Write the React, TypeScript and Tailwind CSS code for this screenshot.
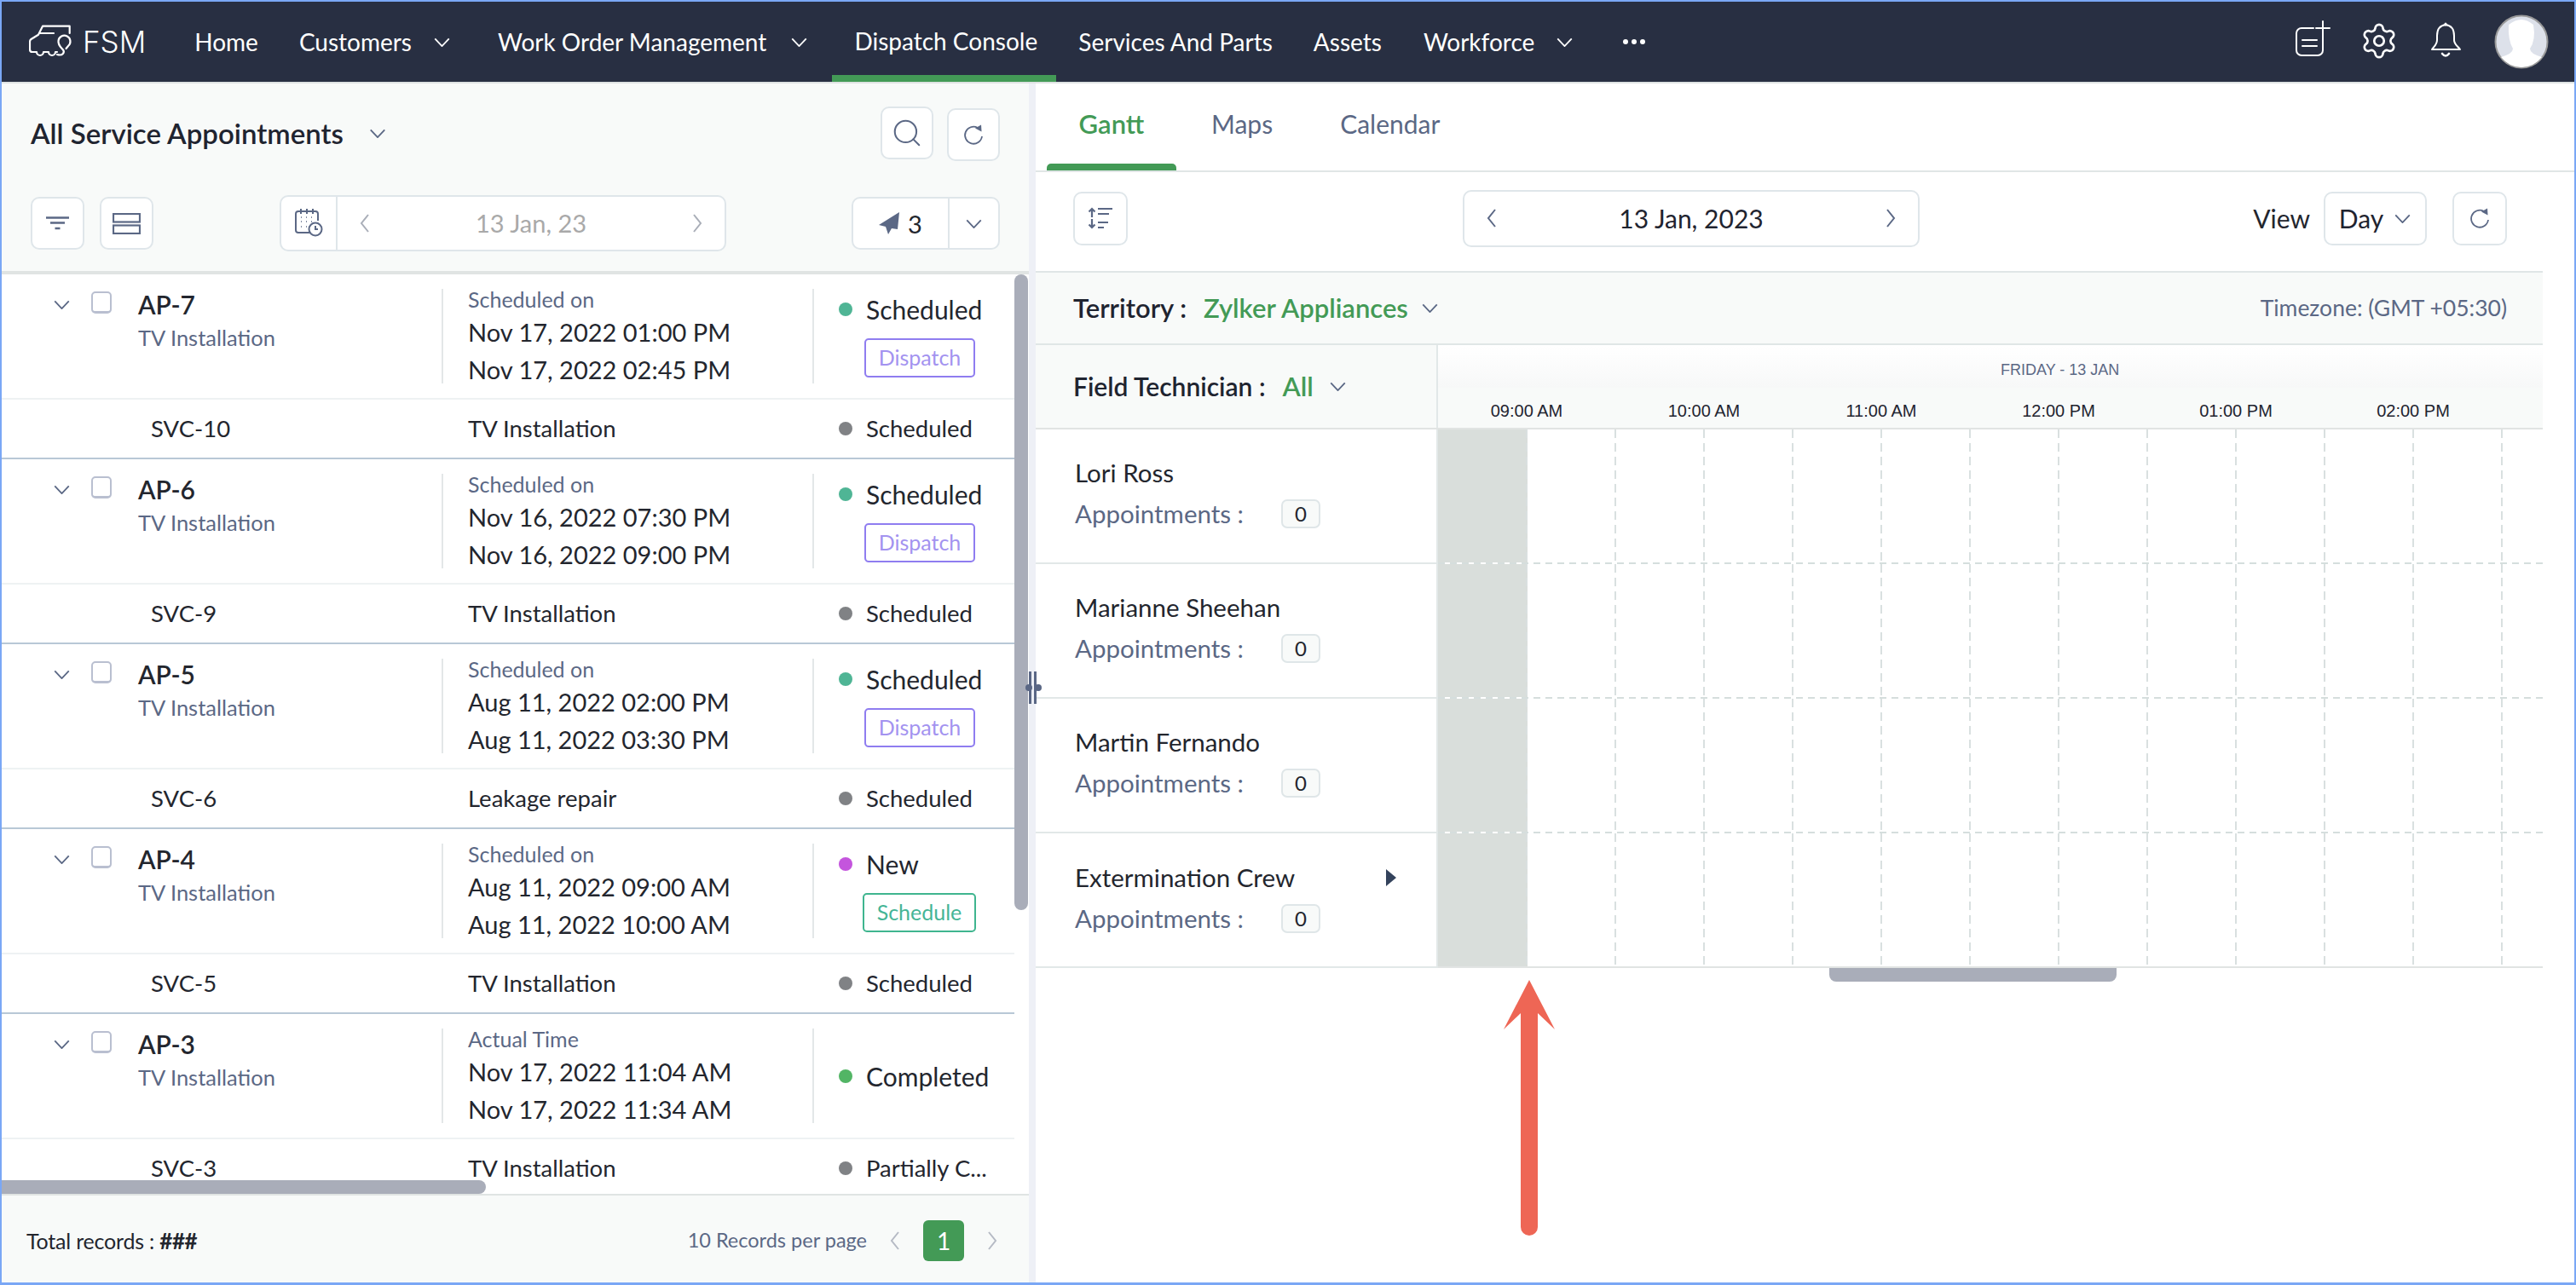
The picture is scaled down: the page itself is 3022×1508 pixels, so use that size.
import { Search, Settings } from 'lucide-react';

const appointments = [
  { id: 'AP-7', label: 'Scheduled on', start: 'Nov 17, 2022 01:00 PM', end: 'Nov 17, 2022 02:45 PM', status: 'Scheduled', dot: 'bg-[#4fb595]', action: 'Dispatch', svc: 'SVC-10', work: 'TV Installation', svcStatus: 'Scheduled' },
  { id: 'AP-6', label: 'Scheduled on', start: 'Nov 16, 2022 07:30 PM', end: 'Nov 16, 2022 09:00 PM', status: 'Scheduled', dot: 'bg-[#4fb595]', action: 'Dispatch', svc: 'SVC-9', work: 'TV Installation', svcStatus: 'Scheduled' },
  { id: 'AP-5', label: 'Scheduled on', start: 'Aug 11, 2022 02:00 PM', end: 'Aug 11, 2022 03:30 PM', status: 'Scheduled', dot: 'bg-[#4fb595]', action: 'Dispatch', svc: 'SVC-6', work: 'Leakage repair', svcStatus: 'Scheduled' },
  { id: 'AP-4', label: 'Scheduled on', start: 'Aug 11, 2022 09:00 AM', end: 'Aug 11, 2022 10:00 AM', status: 'New', dot: 'bg-[#c455dd]', action: 'Schedule', svc: 'SVC-5', work: 'TV Installation', svcStatus: 'Scheduled' },
  { id: 'AP-3', label: 'Actual Time', start: 'Nov 17, 2022 11:04 AM', end: 'Nov 17, 2022 11:34 AM', status: 'Completed', dot: 'bg-[#52b565]', action: '', svc: 'SVC-3', work: 'TV Installation', svcStatus: 'Partially C...' },
];

const technicians = [
  { name: 'Lori Ross', top: 'pt-[33px]', gap: 'mt-[12px]' },
  { name: 'Marianne Sheehan', top: 'pt-[33px]', gap: 'mt-[12px]' },
  { name: 'Martin Fernando', top: 'pt-[33px]', gap: 'mt-[12px]' },
  { name: 'Extermination Crew', top: 'pt-[34px]', gap: 'mt-[12px]', caret: true },
];

const hours = ['09:00 AM', '10:00 AM', '11:00 AM', '12:00 PM', '01:00 PM', '02:00 PM'];
const slots = Array.from({ length: 13 }, (_, i) => i);

function Chevron({ dir = 'down', className = '' }: { dir?: 'down' | 'left' | 'right'; className?: string }) {
  const d = dir === 'down' ? 'M1 1.5 L10 11 L19 1.5' : dir === 'left' ? 'M10 1 L2 11 L10 21' : 'M2 1 L10 11 L2 21';
  const box = dir === 'down' ? '0 0 20 12' : '0 0 12 22';
  return (
    <svg viewBox={box} fill="none" stroke="currentColor" strokeWidth="2" className={className}>
      <path d={d} />
    </svg>
  );
}

function Refresh() {
  return (
    <svg viewBox="0 0 28 28" className="h-[28px] w-[28px] text-[#5b6885]" fill="none" stroke="currentColor" strokeWidth="1.8">
      <path d="M19 6 A10 10 0 1 0 24 16" />
      <path d="M16 6.5 L23 2.5 L23.5 10.5 Z" fill="currentColor" stroke="none" />
    </svg>
  );
}

function TruckLogo() {
  return (
    <svg viewBox="0 0 54 40" className="h-[40px] w-[54px]" fill="none" stroke="#fff" strokeWidth="2.2" strokeLinejoin="round" strokeLinecap="round">
      <path d="M47.7 10 V1.7 H16 L11 11.7 L2.5 17 Q1 18 1 20 V29 Q1 32 4 32 H9 a4 4 0 0 0 8 0 H23 a4 4 0 0 0 8 0 H33" />
      <path d="M12 10 H29" />
      <path d="M33 35 C40 37 42 32 40 29.5 C37 26 34 24 34.5 19 A7 7 0 1 1 46 25 L43.5 28" />
    </svg>
  );
}

function NotePlus() {
  return (
    <svg viewBox="0 0 48 48" className="-mt-[10px] h-[48px] w-[48px]" fill="none" stroke="#fff" strokeWidth="2" strokeLinecap="round">
      <path d="M23 13 H9 a6 6 0 0 0 -6 6 V39 a6 6 0 0 0 6 6 H28 a6 6 0 0 0 6 -6 V21" />
      <path d="M10 27 H27 M10 34 H27" />
      <path d="M34 5 V21 M26 13 H42" />
    </svg>
  );
}

function BellIcon() {
  return (
    <svg viewBox="0 0 38 48" className="-mt-[10px] h-[48px] w-[38px]" fill="none" stroke="#fff" strokeWidth="2" strokeLinejoin="round" strokeLinecap="round">
      <path d="M18 9 C10 10 8 16 8 22 V27 C8 32 5 34 2 38 H35 C32 34 28 32 28 27 V22 C28 16 26 10 18 9 Z" />
      <path d="M18 9 V8" strokeWidth="3" />
      <path d="M14 43 Q18 48 22 43" strokeWidth="2.6" />
    </svg>
  );
}

function Avatar() {
  return (
    <svg viewBox="0 0 64 64" className="h-[64px] w-[64px]">
      <circle cx="32" cy="32" r="30.5" fill="#dde1ea" stroke="#9a9a9a" strokeWidth="2" />
      <path d="M17 12 Q32 0 46 12 Q49 30 42 40 Q42 46 56 50 Q46 62 32 62 Q18 62 8 50 Q22 46 22 40 Q16 30 17 12 Z" fill="#fff" />
    </svg>
  );
}

function CalendarClock() {
  return (
    <svg viewBox="0 0 36 36" className="h-[36px] w-[36px]" fill="none" stroke="#5b6885" strokeWidth="2">
      <path d="M20 29 H6 a3 3 0 0 1 -3 -3 V7 a3 3 0 0 1 3 -3 H26 a3 3 0 0 1 3 3 V15" />
      <path d="M9 1 V7 M16 1 V7 M23 1 V7" />
      <path d="M9 11 h1 M15 11 h1 M21 11 h1 M9 16 h1 M15 16 h1 M21 16 h1 M9 22 h1 M15 22 h1" strokeWidth="1.6" />
      <circle cx="26" cy="25" r="7.5" />
      <path d="M26 21 V25 H29" />
    </svg>
  );
}

function BoxButton({ children, className = '' }: { children: React.ReactNode; className?: string }) {
  return <div className={`flex shrink-0 items-center justify-center rounded-[10px] border-2 border-[#dfe6ea] bg-white ${className}`}>{children}</div>;
}

function NavLabel({ children, className = '' }: { children: React.ReactNode; className?: string }) {
  return <span className={`text-[28px] leading-none text-white ${className}`}>{children}</span>;
}

function AppointmentRow({ a }: { a: (typeof appointments)[number] }) {
  return (
    <div className="w-[1188px] border-b-2 border-[#b8c8d6] bg-white">
      <div className="grid h-[145px] grid-cols-[516px_435px_237px] pt-[17px]">
        <div className="flex items-start pl-[60px]">
          <Chevron className="mt-[13px] h-[11px] w-[21px] text-[#5b6885]" />
          <span className="ml-[24px] mt-[3px] h-[26px] w-[24px] rounded-[5px] border-2 border-b-[3px] border-[#b9bfd0] bg-white" />
          <div className="ml-[31px]">
            <div className="text-[30px] font-semibold leading-[36px] text-[#23262e]">{a.id}</div>
            <div className="mt-[4px] text-[25.5px] leading-[34px] text-[#5b6885]">TV Installation</div>
          </div>
        </div>
        <div className="h-[111px] border-l-2 border-[#e3e7e8] pl-[29px]">
          <div className="h-[26px] text-[25px] leading-[24px] text-[#5b6885]">{a.label}</div>
          <div className="mt-[3px] text-[29px] leading-[44px] text-[#23262e]">{a.start}</div>
          <div className="text-[29px] leading-[44px] text-[#23262e]">{a.end}</div>
        </div>
        <div className={`flex h-[111px] flex-col border-l-2 border-[#e3e7e8] pl-[29px] ${a.action ? 'pt-[8px]' : 'justify-center'}`}>
          <div className="flex h-[32px] items-center">
            <span className={`h-[16px] w-[16px] rounded-full ${a.dot}`} />
            <span className="ml-[16px] text-[30px] leading-[32px] text-[#23262e]">{a.status}</span>
          </div>
          {a.action === 'Dispatch' && (
            <div className="ml-[30px] mt-[18px] flex h-[46px] w-[130px] items-center justify-center rounded-[5px] border-2 border-[#8f7df0] text-[25px] text-[#a393f0]">Dispatch</div>
          )}
          {a.action === 'Schedule' && (
            <div className="ml-[28px] mt-[18px] flex h-[46px] w-[133px] items-center justify-center rounded-[5px] border-2 border-[#3fb58f] text-[25px] text-[#45b596]">Schedule</div>
          )}
        </div>
      </div>
      <div className="grid h-[70px] grid-cols-[516px_435px_237px] items-center border-t-2 border-[#eef2f3] text-[27.5px] text-[#23262e]">
        <div className="pl-[175px]">{a.svc}</div>
        <div className="pl-[31px]">{a.work}</div>
        <div className="flex items-center pl-[31px]">
          <span className="h-[16px] w-[16px] rounded-full bg-[#808285]" />
          <span className="ml-[16px]">{a.svcStatus}</span>
        </div>
      </div>
    </div>
  );
}

function TechnicianRow({ t }: { t: (typeof technicians)[number] }) {
  return (
    <div className="flex h-[158px]">
      <div className={`w-[472px] shrink-0 border-r-2 border-b-2 border-[#e2e8e8] pl-[46px] ${t.top}`}>
        <div className="flex w-[377px] items-center justify-between text-[29.5px] leading-[36px] text-[#23262e]">
          <span>{t.name}</span>
          {t.caret && (
            <svg viewBox="0 0 12 20" className="h-[20px] w-[12px]">
              <path d="M0 0 L12 10 L0 20 Z" fill="#34435c" />
            </svg>
          )}
        </div>
        <div className={`flex h-[36px] items-center ${t.gap}`}>
          <span className="w-[242px] text-[29.5px] text-[#5b6885]">Appointments :</span>
          <span className="flex h-[34px] w-[46px] items-center justify-center rounded-[7px] border-2 border-[#dfe6e8] bg-[#f8faf9] text-[24px] text-[#23262e]">0</span>
        </div>
      </div>
      <div className="flex min-w-0 flex-1 flex-col">
        <div className="flex min-h-0 flex-1 overflow-hidden">
          {slots.map((i) => (
            <div
              key={i}
              className={`h-full shrink-0 bg-no-repeat [background-image:repeating-linear-gradient(to_bottom,#d9e0e0_0,#d9e0e0_10px,transparent_10px,transparent_16px)] [background-position:right] [background-size:2px_100%] ${i === 0 ? 'w-[105px] bg-[#d9dedb]' : 'w-[104px]'}`}
            />
          ))}
        </div>
        <div className={`h-[2px] ${t.caret ? 'bg-[#e1e4e3]' : 'bg-white [background-image:repeating-linear-gradient(to_right,#d5dedd_0,#d5dedd_8px,transparent_8px,transparent_14px)]'}`} />
      </div>
    </div>
  );
}

export default function App() {
  return (
    <div className="relative flex h-[1508px] w-[3022px] flex-col overflow-hidden border-x-2 border-t-2 border-b-[3px] border-[#7aa7f5] bg-white [font-family:Lato,sans-serif]">
      {/* top nav */}
      <header className="flex h-[94px] shrink-0 items-center bg-[#282f42]">
        <div className="ml-[32px]"><TruckLogo /></div>
        <span className="ml-[9px] text-[35px] font-light leading-none text-white [font-family:Inter,sans-serif]">FSM</span>
        <NavLabel className="ml-[57px]">Home</NavLabel>
        <NavLabel className="ml-[48px]">Customers</NavLabel>
        <Chevron className="ml-[26px] h-[11px] w-[19px] text-white" />
        <NavLabel className="ml-[56px]">Work Order Management</NavLabel>
        <Chevron className="ml-[29px] h-[11px] w-[19px] text-white" />
        <div className="ml-[29px] flex h-full w-[263px] flex-col">
          <div className="flex flex-1 items-center justify-center pl-[4px] pt-[6px]"><NavLabel>Dispatch Console</NavLabel></div>
          <div className="h-[8px] bg-[#439a56]" />
        </div>
        <NavLabel className="ml-[26px]">Services And Parts</NavLabel>
        <NavLabel className="ml-[48px]">Assets</NavLabel>
        <NavLabel className="ml-[49px]">Workforce</NavLabel>
        <Chevron className="ml-[26px] h-[11px] w-[19px] text-white" />
        <div className="ml-[59px] flex gap-[4px]">
          <span className="h-[6px] w-[6px] rounded-full bg-white" />
          <span className="h-[6px] w-[6px] rounded-full bg-white" />
          <span className="h-[6px] w-[6px] rounded-full bg-white" />
        </div>
        <div className="ml-auto flex items-center pr-[30px]">
          <NotePlus />
          <Settings size={46} strokeWidth={1.4} className="-mt-[2px] ml-[29px] text-white" />
          <div className="ml-[37px] flex"><BellIcon /></div>
          <div className="ml-[37px]"><Avatar /></div>
        </div>
      </header>

      <div className="flex min-h-0 flex-1 border-t-2 border-[#dfe3e3]">
        {/* left panel */}
        <div className="flex w-[1205px] shrink-0 flex-col bg-[#f8faf9]">
          <div className="h-[220px] shrink-0 pl-[34px] pr-[34px] pt-[25px]">
            <div className="flex items-center">
              <span className="text-[33px] font-semibold leading-[62px] text-[#1f2430]">All Service Appointments</span>
              <Chevron className="ml-[30px] h-[11px] w-[20px] text-[#5b6885]" />
              <BoxButton className="ml-auto h-[62px] w-[62px]"><Search size={38} strokeWidth={1.3} className="text-[#5b6885]" /></BoxButton>
              <BoxButton className="ml-[16px] mt-[4px] h-[62px] w-[62px]"><Refresh /></BoxButton>
            </div>
            <div className="mt-[40px] flex items-center">
              <BoxButton className="h-[62px] w-[63px]">
                <svg viewBox="0 0 27 16" className="h-[16px] w-[27px]" stroke="#5b6885" strokeWidth="2.4"><path d="M0 1.5 H27 M5 7.5 H22 M10.5 14 H16.5" /></svg>
              </BoxButton>
              <BoxButton className="ml-[18px] h-[62px] w-[63px]">
                <svg viewBox="0 0 33 25" className="h-[25px] w-[33px]" fill="none" stroke="#5b6885" strokeWidth="2.2"><rect x="1" y="1" width="31" height="9.5" /><rect x="1" y="14.5" width="31" height="9.5" /></svg>
              </BoxButton>
              <div className="ml-[148px] flex h-[66px] w-[524px] items-center rounded-[10px] border-2 border-[#dfe6ea] bg-white">
                <div className="flex h-full w-[66px] items-center justify-center border-r-2 border-[#dfe6ea]"><CalendarClock /></div>
                <div className="flex flex-1 items-center justify-between px-[26px] text-[29px] text-[#a9a9a9]">
                  <Chevron dir="left" className="h-[22px] w-[12px] text-[#a9aeb8]" />
                  <span>13 Jan, 23</span>
                  <Chevron dir="right" className="h-[22px] w-[12px] text-[#a9aeb8]" />
                </div>
              </div>
              <div className="ml-auto flex h-[62px] w-[174px] items-center rounded-[10px] border-2 border-[#dfe6ea] bg-white">
                <div className="flex h-full w-[113px] items-center justify-center gap-[10px] border-r-2 border-[#dfe6ea]">
                  <svg viewBox="0 0 24 26" className="h-[26px] w-[24px]"><path d="M24 0 L0 15 L8 17 L11 26 L15 19 L22 20 Z" fill="#5b6885" /></svg>
                  <span className="text-[29px] leading-none text-[#23262e]">3</span>
                </div>
                <div className="flex flex-1 items-center justify-center"><Chevron className="h-[11px] w-[21px] text-[#5b6885]" /></div>
              </div>
            </div>
          </div>

          {/* list */}
          <div className="relative min-h-0 flex-1 overflow-hidden border-t-4 border-[#e0e4e3] bg-white">
            {appointments.map((a) => (
              <AppointmentRow key={a.id} a={a} />
            ))}
            <div className="absolute right-[1px] top-0 h-[746px] w-[16px] rounded-full bg-[#a9adb9]" />
            <div className="absolute bottom-0 left-0 h-[16px] w-[568px] rounded-r-full bg-[#a9adb9]" />
          </div>

          {/* footer */}
          <div className="flex h-[104px] shrink-0 items-center border-t-2 border-[#e0e4e3] pl-[29px] pr-[37px] pt-[4px]">
            <span className="text-[25px] tracking-[-0.2px] text-[#23262e]">Total records : <span className="text-[26px] font-bold tracking-[-0.5px]">###</span></span>
            <span className="ml-auto text-[23.5px] text-[#5b6885]">10 Records per page</span>
            <Chevron dir="left" className="ml-[27px] h-[22px] w-[12px] text-[#b5bac4]" />
            <div className="ml-[27px] flex h-[48px] w-[48px] items-center justify-center rounded-[6px] bg-[#439a56] text-[28px] text-white">1</div>
            <Chevron dir="right" className="ml-[27px] h-[22px] w-[12px] text-[#b5bac4]" />
          </div>
        </div>

        {/* splitter */}
        <div className="relative w-[8px] shrink-0 bg-[#eef0f6]">
          <div className="absolute left-0 top-[690px] h-[38px] w-[3px] bg-[#5a6785]" />
          <div className="absolute left-[6px] top-[690px] h-[38px] w-[3px] bg-[#5a6785]" />
          <div className="absolute left-[-4px] top-[705px] h-[8px] w-[8px] rounded-full bg-[#5a6785]" />
          <div className="absolute left-[7px] top-[705px] h-[8px] w-[8px] rounded-full bg-[#5a6785]" />
        </div>

        {/* right panel */}
        <div className="flex min-w-0 flex-1 flex-col">
          <div className="flex h-[104px] shrink-0 border-b-2 border-[#e0e6e6] pl-[13px] text-[30px] text-[#5b6885]">
            <div className="flex h-full w-[152px] flex-col">
              <div className="flex flex-1 items-center justify-center text-[31px] font-semibold text-[#439a56]">Gantt</div>
              <div className="h-[8px] rounded-t-[5px] bg-[#439a56]" />
            </div>
            <div className="ml-[41px] flex h-[94px] items-center">Maps</div>
            <div className="ml-[79px] flex h-[94px] items-center">Calendar</div>
          </div>

          <div className="flex h-[116px] shrink-0 items-center pb-[8px] pl-[44px] pr-[79px]">
            <BoxButton className="h-[63px] w-[64px]">
              <svg viewBox="0 0 30 26" className="h-[26px] w-[30px]" fill="none" stroke="#5b6885" strokeWidth="2.2">
                <path d="M5 12 V2 M1.5 5.5 L5 2 L8.5 5.5 M5 14 V24 M1.5 20.5 L5 24 L8.5 20.5" />
                <path d="M12 2 H29 M12 8 H25 M12 18 H24 M12 24 H19" />
              </svg>
            </BoxButton>
            <div className="ml-[393px] flex h-[67px] w-[536px] items-center justify-between rounded-[10px] border-2 border-[#dfe6ea] bg-white px-[26px] text-[30px] text-[#1f2430]">
              <Chevron dir="left" className="h-[22px] w-[12px] text-[#5b6885]" />
              <span>13 Jan, 2023</span>
              <Chevron dir="right" className="h-[22px] w-[12px] text-[#5b6885]" />
            </div>
            <span className="ml-auto text-[30px] text-[#23262e]">View</span>
            <BoxButton className="ml-[16px] h-[63px] w-[121px] gap-[12px] text-[30px] text-[#1f2430]">
              <span>Day</span>
              <Chevron className="h-[11px] w-[21px] text-[#5b6885]" />
            </BoxButton>
            <BoxButton className="ml-[30px] h-[63px] w-[64px]"><Refresh /></BoxButton>
          </div>

          {/* gantt */}
          <div className="w-[1768px]">
            <div className="flex h-[87px] items-center border-y-2 border-[#e0e6e6] bg-[#f8faf9] pl-[44px] pr-[42px]">
              <span className="text-[31px] font-semibold text-[#1f2430]">Territory :</span>
              <span className="ml-[20px] text-[31px] font-semibold text-[#439a56]">Zylker Appliances</span>
              <Chevron className="ml-[15px] h-[11px] w-[21px] text-[#5b6885]" />
              <span className="ml-auto text-[26.5px] text-[#5b6885]">Timezone: (GMT +05:30)</span>
            </div>
            <div className="flex h-[99px] border-b-2 border-[#e1e4e3]">
              <div className="flex w-[472px] shrink-0 items-center border-r-2 border-[#e2e8e8] bg-[#f8faf9] pl-[44px]">
                <span className="text-[30px] font-semibold text-[#1f2430]">Field Technician :</span>
                <span className="ml-[20px] text-[31px] font-semibold text-[#439a56]">All</span>
                <Chevron className="ml-[18px] h-[11px] w-[21px] text-[#5b6885]" />
              </div>
              <div className="flex min-w-0 flex-1 flex-col bg-[#f8faf9] [font-family:'Liberation_Sans',Arial,sans-serif]">
                <div className="h-[50px] bg-gradient-to-b from-white to-[#f7f8f8] pl-[660px] pt-[18px] text-[18px] leading-[22px] text-[#5b6885]">FRIDAY - 13 JAN</div>
                <div className="flex flex-1 overflow-hidden">
                  {hours.map((h) => (
                    <div key={h} className="flex w-[208px] shrink-0 items-center justify-center pt-[6px] text-[20px] leading-none text-[#1f2430]">{h}</div>
                  ))}
                </div>
              </div>
            </div>
            {technicians.map((t) => (
              <TechnicianRow key={t.name} t={t} />
            ))}
            <div className="ml-[931px] h-[16px] w-[337px] rounded-b-[8px] bg-[#a9adb9]" />
          </div>
        </div>
      </div>

      {/* annotation arrow */}
      <svg viewBox="0 0 68 304" className="absolute left-[1758px] top-[1146px] h-[304px] w-[68px]">
        <path d="M34 2 L64 60 L44 41 V292 a10 10 0 0 1 -20 0 V41 L4 60 Z" fill="#ee6655" />
      </svg>
    </div>
  );
}
